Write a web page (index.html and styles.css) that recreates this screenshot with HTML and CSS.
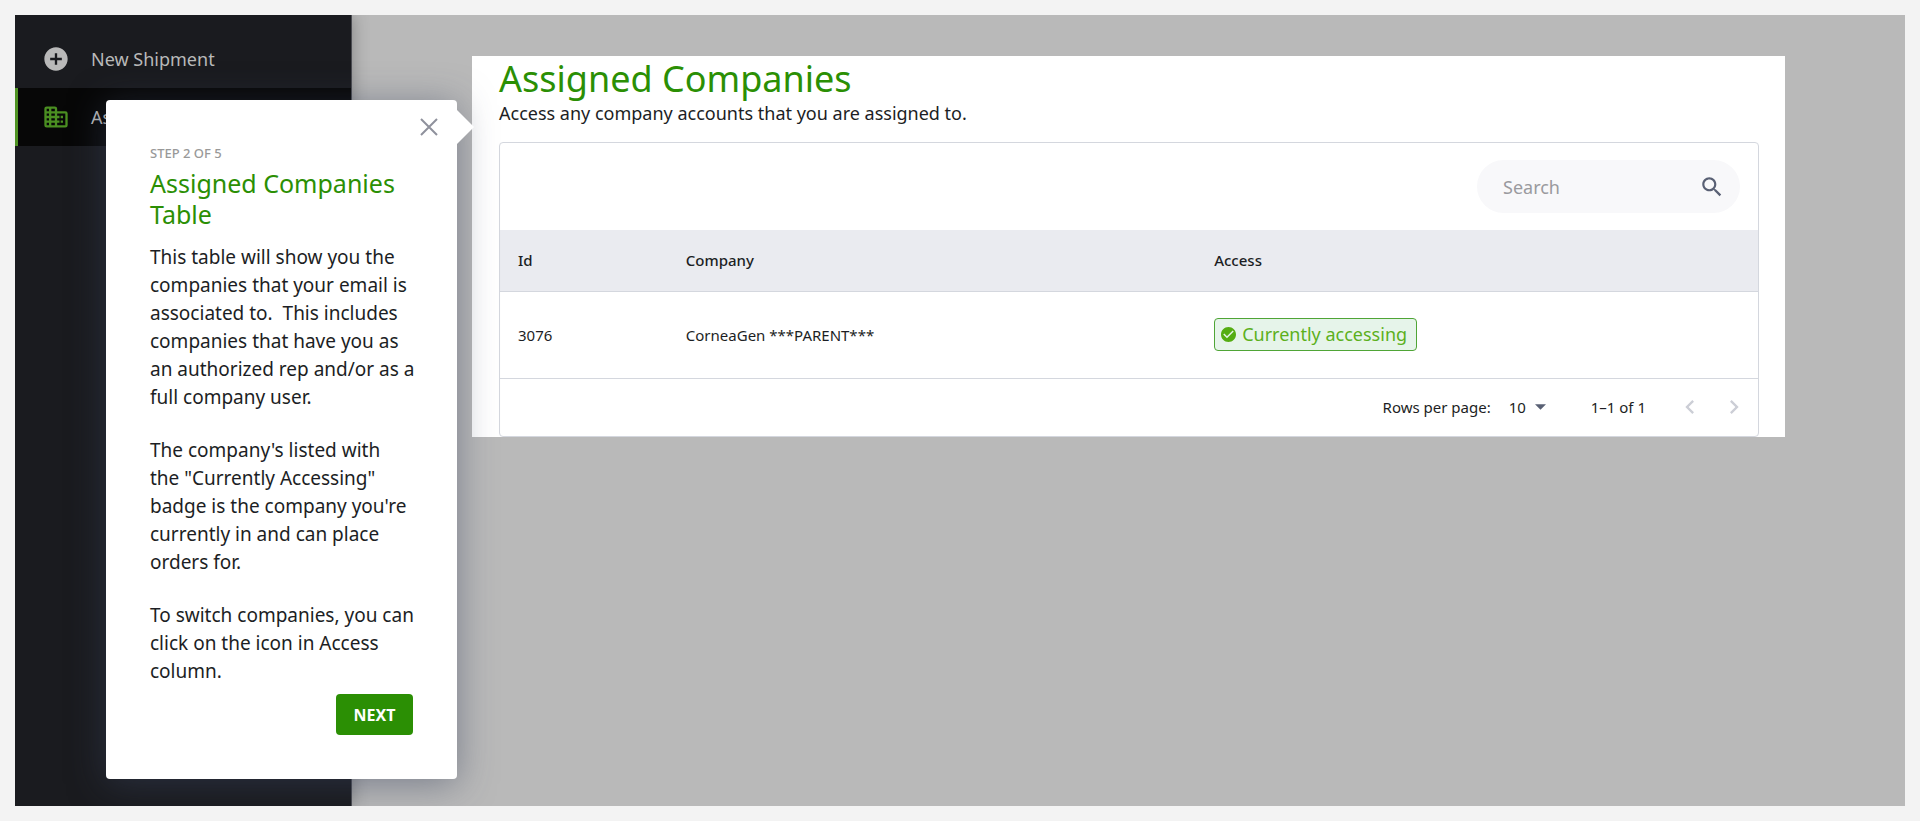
FILE: index.html
```html
<!DOCTYPE html>
<html lang="en">
<head>
<meta charset="utf-8">
<title>Assigned Companies</title>
<link rel="stylesheet" href="styles.css">
</head>
<body>
<div class="app">
  <nav class="sidebar">
    <a class="nav-item" href="#new">
      <svg class="nav-icon" viewBox="0 0 24 24"><path d="M12 2C6.480 2 2 6.480 2 12s4.480 10 10 10 10-4.480 10-10S17.520 2 12 2zm5 11h-4v4h-2v-4H7v-2h4V7h2v4h4v2z"/></svg>
      <span>New Shipment</span>
    </a>
    <a class="nav-item nav-item-active" href="#companies">
      <svg class="nav-icon" viewBox="0 0 24 24" fill-rule="evenodd"><path d="M4 3h7a2 2 0 0 1 2 2v2h7a2 2 0 0 1 2 2v10a2 2 0 0 1-2 2H4a2 2 0 0 1-2-2V5a2 2 0 0 1 2-2zM4 5v2h2V5zM8 5v2h3V5zM4 9v2h2V9zM8 9v2h3V9zM4 13v2h2v-2zM8 13v2h3v-2zM4 17v2h2v-2zM8 17v2h3v-2zM13 9v2h2v2h-2v2h2v2h-2v2h7V9zM16 11h2v2h-2zM16 15h2v2h-2z"/></svg>
      <span>Assigned Companies</span>
    </a>
  </nav>

  <main class="main">
    <section class="panel">
      <h1 class="page-title">Assigned Companies</h1>
      <p class="page-subtitle">Access any company accounts that you are assigned to.</p>
      <div class="card">
        <div class="toolbar">
          <label class="search">
            <input class="search-input" type="text" placeholder="Search" aria-label="Search">
            <svg class="search-icon" viewBox="0 0 24 24"><path d="M15.500 14h-.79l-.28-.27C15.410 12.590 16 11.110 16 9.500 16 5.910 13.090 3 9.500 3S3 5.910 3 9.500 5.910 16 9.500 16c1.610 0 3.090-.59 4.230-1.570l.27.28v.79l5 4.990L20.490 19l-4.990-5zm-6 0C7.010 14 5 11.990 5 9.500S7.010 5 9.500 5 14 7.010 14 9.500 11.990 14 9.500 14z"/></svg>
          </label>
        </div>
        <table class="table">
          <thead>
            <tr><th class="col-id">Id</th><th class="col-company">Company</th><th>Access</th></tr>
          </thead>
          <tbody>
            <tr>
              <td>3076</td>
              <td>CorneaGen ***PARENT***</td>
              <td>
                <span class="badge">
                  <svg class="badge-icon" viewBox="2 2 20 20"><path d="M12 2C6.480 2 2 6.480 2 12s4.480 10 10 10 10-4.480 10-10S17.520 2 12 2zm-2 15l-5-5 1.410-1.410L10 14.170l7.590-7.590L19 8l-9 9z"/></svg>
                  Currently accessing
                </span>
              </td>
            </tr>
          </tbody>
        </table>
        <div class="pager">
          <label for="rows">Rows per page:</label>
          <span class="rows">
            <select class="rows-select" id="rows"><option>10</option></select>
            <svg class="rows-arrow" viewBox="0 0 10 5"><path d="M0 0l5 5 5-5z"/></svg>
          </span>
          <span class="range">1–1 of 1</span>
          <button class="page-button" type="button" aria-label="Previous page" disabled><svg viewBox="0 0 24 24"><path d="M15.410 7.410L14 6l-6 6 6 6 1.410-1.410L10.830 12z"/></svg></button>
          <button class="page-button" type="button" aria-label="Next page" disabled><svg viewBox="0 0 24 24"><path d="M10 6L8.590 7.410 13.170 12l-4.580 4.590L10 18l6-6z"/></svg></button>
        </div>
      </div>
    </section>
  </main>

  <aside class="tour" role="dialog" aria-labelledby="tour-title">
    <button class="tour-close" type="button" aria-label="Close"><svg viewBox="0 0 18 18"><path d="M1 1l16 16M17 1L1 17"/></svg></button>
    <p class="tour-step">STEP 2 OF 5</p>
    <h2 class="tour-title" id="tour-title">Assigned Companies Table</h2>
    <p class="tour-text">This table will show you the<br>companies that your email is<br>associated to.&nbsp; This includes<br>companies that have you as<br>an authorized rep and/or as a<br>full company user.</p>
    <p class="tour-text">The company's listed with<br>the "Currently Accessing"<br>badge is the company you're<br>currently in and can place<br>orders for.</p>
    <p class="tour-text">To switch companies, you can<br>click on the icon in Access<br>column.</p>
    <div class="tour-actions"><button class="tour-next" type="button">NEXT</button></div>
  </aside>
</div>
</body>
</html>
```

FILE: styles.css
```css
* {
  box-sizing: border-box;
}

body {
  margin: 0;
  padding: 15px;
  min-height: 100vh;
  display: flex;
  background: #f3f3f3;
  color: #1c1e24;
  font-family: "Noto Sans", sans-serif;
}

h1, h2, p {
  margin: 0;
  font-weight: 400;
}

button, input, select {
  font-family: inherit;
  color: inherit;
  border: 0;
}

.app {
  position: relative;
  flex: 1;
  display: flex;
  overflow: hidden;
  background: #b9b9b9;
}

.sidebar {
  flex: 0 0 337px;
  padding-top: 15px;
  background: #1a1b1f;
  border-right: 1px solid #4b4c52;
  box-shadow: 0 0 16px rgba(0, 0, 0, 0.3);
}

.nav-item {
  display: flex;
  align-items: center;
  gap: 21px;
  height: 58px;
  padding-left: 24px;
  border-left: 3px solid transparent;
  color: #b9b9b9;
  font-size: 18px;
  text-decoration: none;
}

.nav-item-active {
  background: #070707;
  border-left-color: #4f9323;
}

.nav-icon {
  width: 28px;
  height: 28px;
  fill: #b9b9b9;
}

.nav-item-active .nav-icon {
  fill: #4b8f22;
}

.main {
  flex: 1;
  padding: 41px 120px 40px;
}

.panel {
  padding: 1px 26px 0 27px;
  background: #fff;
}

.page-title {
  color: #2b8f04;
  font-size: 36px;
  line-height: 44px;
}

.page-subtitle {
  padding-bottom: 17px;
  font-size: 18px;
  line-height: 24px;
}

.card {
  border: 1px solid #d4d7de;
  border-radius: 4px;
}

.toolbar {
  display: flex;
  justify-content: flex-end;
  padding: 17px 18px;
}

.search {
  display: flex;
  align-items: center;
  width: 263px;
  height: 53px;
  padding: 0 15px 0 26px;
  border-radius: 27px;
  background: #f8f8fa;
}

.search-input {
  flex: 1;
  min-width: 0;
  padding: 0;
  background: transparent;
  font-size: 18px;
}

.search-input::placeholder {
  color: #9a9a9e;
  opacity: 1;
}

.search-icon {
  width: 26px;
  height: 26px;
  fill: #596074;
}

.table {
  width: 100%;
  border-collapse: collapse;
  table-layout: fixed;
  font-size: 15px;
}

.table th,
.table td {
  padding: 0 18px;
  text-align: left;
  border-bottom: 1px solid #d4d7de;
}

.table th {
  height: 61px;
  background: #eaebf0;
  font-weight: 500;
}

.table td {
  height: 87px;
}

.col-id {
  width: 13.34%;
}

.col-company {
  width: 42%;
}

.badge {
  display: inline-flex;
  align-items: center;
  gap: 6px;
  padding: 3px 9px 3px 6px;
  border: 1px solid #4fa536;
  border-radius: 4px;
  background: #e6f4ea;
  color: #5cb01c;
  font-size: 18px;
  line-height: 25px;
}

.badge-icon {
  width: 15px;
  height: 15px;
  fill: #55ad12;
}

.pager {
  display: flex;
  align-items: center;
  justify-content: flex-end;
  height: 57px;
  padding-right: 10px;
  font-size: 15px;
}

.rows {
  display: flex;
  align-items: center;
  gap: 8px;
  margin: 0 45px 0 18px;
}

.rows-select {
  appearance: none;
  padding: 0;
  background: transparent;
  font-size: 15px;
}

.rows-arrow {
  width: 11px;
  height: 6px;
  fill: #596074;
}

.range {
  margin-right: 30px;
}

.page-button {
  width: 28px;
  height: 28px;
  padding: 0;
  background: transparent;
}

.page-button + .page-button {
  margin-left: 16px;
}

.page-button svg {
  display: block;
  width: 28px;
  height: 28px;
  fill: #ccced6;
}

.tour {
  position: absolute;
  top: 85px;
  left: 91px;
  width: 351px;
  padding: 44px;
  border-radius: 4px;
  background: #fff;
  box-shadow: 0 5px 36px rgba(58, 68, 93, 0.5);
}

.tour::after {
  content: "";
  position: absolute;
  top: 10px;
  left: 100%;
  border: 17px solid transparent;
  border-left-color: #fff;
  border-right-width: 0;
}

.tour-close {
  position: absolute;
  top: 18px;
  right: 19px;
  width: 18px;
  height: 18px;
  padding: 0;
  background: transparent;
}

.tour-close svg {
  display: block;
  fill: none;
  stroke: #8f919c;
  stroke-width: 2;
}

.tour-step {
  color: #999;
  font-size: 13px;
  font-weight: 500;
  line-height: 18px;
}

.tour-title {
  padding: 6px 0 13px;
  color: #2b8f04;
  font-size: 25px;
  line-height: 31px;
}

.tour-text {
  font-size: 19px;
  line-height: 28px;
  white-space: nowrap;
}

.tour-text + .tour-text {
  margin-top: 25px;
}

.tour-actions {
  display: flex;
  justify-content: flex-end;
  margin-top: 9px;
}

.tour-next {
  width: 77px;
  height: 41px;
  padding: 0;
  border-radius: 4px;
  background: #2b8f04;
  color: #fff;
  font-size: 16px;
  font-weight: 700;
}
```
